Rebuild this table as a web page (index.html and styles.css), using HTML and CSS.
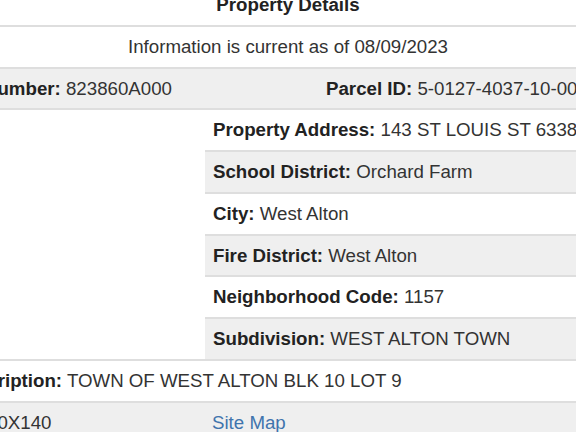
FILE: index.html
```html
<!DOCTYPE html>
<html>
<head>
<meta charset="utf-8">
<link rel="stylesheet" href="styles.css">
</head>
<body>
<div class="details">
  <div class="row head"><strong>Property Details</strong></div>
  <div class="row center">Information is current as of 08/09/2023</div>
  <div class="row gray split-parcel">
    <div><b>Account Number:</b> 823860A000</div>
    <div><b>Parcel ID:</b> 5-0127-4037-10-0009.0000000</div>
  </div>
  <div class="nested-block">
    <div class="map-cell"></div>
    <div class="nested">
      <div class="row"><b>Property Address:</b> 143 ST LOUIS ST 63386</div>
      <div class="row gray"><b>School District:</b> Orchard Farm</div>
      <div class="row"><b>City:</b> West Alton</div>
      <div class="row gray"><b>Fire District:</b> West Alton</div>
      <div class="row"><b>Neighborhood Code:</b> 1157</div>
      <div class="row gray"><b>Subdivision:</b> WEST ALTON TOWN</div>
    </div>
  </div>
  <div class="row legal"><b>Legal Description:</b> TOWN OF WEST ALTON BLK 10 LOT 9</div>
  <div class="row gray split-last">
    <div><b>Lot Size:</b> 50X140</div>
    <div><a href="#">Site Map</a></div>
  </div>
</div>
</body>
</html>
```

FILE: styles.css
```css
html, body {
  margin: 0;
  padding: 0;
  background: #fff;
  overflow: hidden;
}

body {
  font-family: "Liberation Sans", Arial, sans-serif;
  font-size: 18.7px;
  color: #333;
}

.details {
  margin: -15px -104px 0;
}

.row {
  padding: 8px;
  line-height: 23.78px;
  border-top: 2px solid #dedede;
  white-space: nowrap;
}

.row.head {
  border-top: none;
  text-align: center;
}

.row.center {
  text-align: center;
}

.row.legal {
  text-indent: -5px;
}

.gray {
  background: #efefef;
}

b, strong {
  color: #222;
}

.split-parcel {
  display: grid;
  grid-template-columns: 406px 1fr;
  column-gap: 16px;
}

.nested-block {
  display: grid;
  grid-template-columns: 309px 1fr;
  border-top: 2px solid #dedede;
}

.nested .row:first-child {
  border-top: none;
}

.split-last {
  display: grid;
  grid-template-columns: 292px 1fr;
  column-gap: 16px;
}

a {
  color: #3f74ad;
  text-decoration: none;
}
```
